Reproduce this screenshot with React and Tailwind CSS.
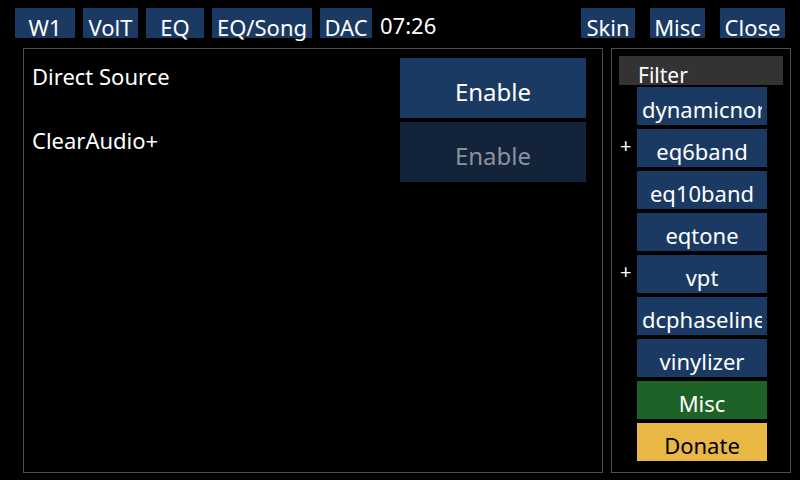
const topLeft = [
  { label: "W1", w: "w-[60px]" },
  { label: "VolT", w: "w-[55px]" },
  { label: "EQ", w: "w-[58px]" },
  { label: "EQ/Song", w: "w-[100px]" },
  { label: "DAC", w: "w-[52px]" },
];

const topRight = [
  { label: "Skin", w: "w-[54px]" },
  { label: "Misc", w: "w-[55px]" },
  { label: "Close", w: "w-[65px]" },
];

const filters = [
  { label: "dynamicnormalizer", plus: false },
  { label: "eq6band", plus: true },
  { label: "eq10band", plus: false },
  { label: "eqtone", plus: false },
  { label: "vpt", plus: true },
  { label: "dcphaseline", plus: false },
  { label: "vinylizer", plus: false },
];

function TopButton({ label, w }) {
  return (
    <div className={`${w} h-[30px] bg-[#1b3a63] flex items-end justify-center`}>
      <span className="text-[22px] leading-none text-white whitespace-nowrap">{label}</span>
    </div>
  );
}

function FilterItem({ label, plus, bg = "bg-[#1b3a63]", color = "text-white" }) {
  return (
    <div className="flex items-start">
      <div className="w-[18px] h-[38px] pl-[1px] pt-[7px] text-[20px] leading-none text-white">
        {plus ? "+" : ""}
      </div>
      <div className={`w-[130px] h-[38px] ${bg} px-[5px] pt-[7px]`}>
        <div className={`overflow-hidden whitespace-nowrap text-center text-[22px] leading-[30px] ${color}`}>
          {label}
        </div>
      </div>
    </div>
  );
}

export default function App() {
  return (
    <div className="w-[800px] h-[480px] bg-black overflow-hidden font-['Noto_Sans',sans-serif] text-white">
      {/* top bar */}
      <div className="h-[48px] pt-[8px] px-[15px] flex items-start justify-between">
        <div className="flex items-start gap-[8px]">
          {topLeft.map((b) => (
            <TopButton key={b.label} {...b} />
          ))}
          <span className="mt-[6px] text-[22px] leading-none">07:26</span>
        </div>
        <div className="flex items-start gap-[15px]">
          {topRight.map((b) => (
            <TopButton key={b.label} {...b} />
          ))}
        </div>
      </div>

      <div className="flex gap-[8px] pl-[23px]">
        {/* settings panel */}
        <div className="w-[580px] h-[425px] border border-[#4d4d57] pt-[9px] pl-[8px] pr-[16px] flex flex-col gap-[4px]">
          <div className="flex justify-between h-[60px]">
            <span className="pt-[7px] text-[22px] leading-none">Direct Source</span>
            <div className="w-[186px] h-[60px] bg-[#1b3a63] pt-[22px] text-center text-[24px] leading-none text-white">
              Enable
            </div>
          </div>
          <div className="flex justify-between h-[60px]">
            <span className="pt-[7px] text-[22px] leading-none">ClearAudio+</span>
            <div className="w-[186px] h-[60px] bg-[#12233a] pt-[22px] text-center text-[24px] leading-none text-[#8a929c]">
              Enable
            </div>
          </div>
        </div>

        {/* filter panel */}
        <div className="w-[180px] h-[425px] border border-[#4d4d57] pt-[7px] pl-[7px]">
          <div className="w-[164px] h-[29px] bg-[#333333] pl-[19px] pt-[9px] text-[21px] leading-none">Filter</div>
          <div className="mt-[2px] flex flex-col gap-[4px]">
            {filters.map((f) => (
              <FilterItem key={f.label} {...f} />
            ))}
            <FilterItem label="Misc" bg="bg-[#1d6328]" />
            <FilterItem label="Donate" bg="bg-[#e8b744]" color="text-black" />
          </div>
        </div>
      </div>
    </div>
  );
}
